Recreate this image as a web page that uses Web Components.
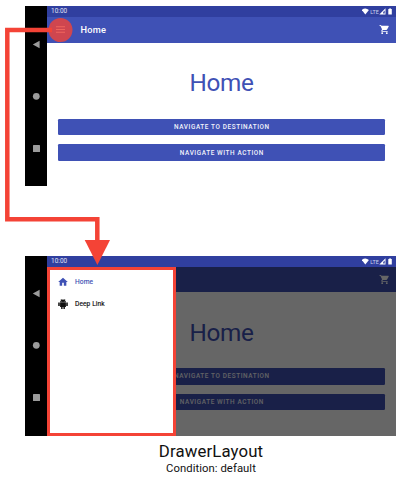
<!DOCTYPE html>
<html lang="en">
<head>
<meta charset="utf-8">
<title>DrawerLayout</title>
<style>body{margin:0;background:#fff;font-family:Roboto,"Liberation Sans",sans-serif;overflow:hidden}</style>
</head>
<body>
<drawer-flow></drawer-flow>
<script>
function define(name, html) {
  customElements.define(name, class extends HTMLElement {
    constructor() {
      super();
      this.attachShadow({ mode: 'open' }).innerHTML = html;
    }
  });
}

define('nav-rail', `<style>
:host{display:flex;flex-direction:column;align-items:center;gap:43px;width:22px;box-sizing:border-box;padding-top:33.5px;background:#000}
svg{display:block;width:9px;height:9px;fill:#9b9b9b}
</style>
<svg viewBox="0 0 9 9"><path d="M7.6 .8V8.2L.8 4.5Z"/></svg>
<svg viewBox="0 0 9 9"><circle cx="4.3" cy="4.3" r="3.4"/></svg>
<svg viewBox="0 0 9 9"><rect x="1" y="1" width="7" height="7" rx=".5"/></svg>`);

define('status-bar', `<style>
:host{display:flex;align-items:center;justify-content:space-between;height:11px;box-sizing:border-box;padding:0 3px 0 4px;background:#303f9f;color:#e0e3f4}
.time{font-size:6.4px;line-height:11px;letter-spacing:.05px}
svg{display:block;width:31px;height:11px}
text{font:6.2px Roboto,sans-serif;fill:#cfd3ee}
</style>
<span class="time">10:00</span>
<svg viewBox="0 0 31 11" fill="#fff"><path d="M-.3 4Q3.300 1 6.900 4L3.300 8.400Z"/><text x="8.300" y="8" textLength="8.400" lengthAdjust="spacingAndGlyphs">LTE</text><path fill-rule="evenodd" d="M17.300 8.400 23.500 2.200V8.400ZM21.200 5.900V7.600H22.700V4.400Z"/><path d="M26.300 3H27.400V2.200H28.700V3H29.800V8.500H26.300Z"/></svg>`);

define('app-bar', `<style>
:host{display:flex;align-items:center;height:25.7px;box-sizing:border-box;padding:0 6px 0 8.5px;background:#3f51b5;color:#fff}
.menu{width:9px;height:9px;fill:#fff;opacity:.85}
b{margin-left:16px;font-size:9.2px;line-height:12px;font-weight:500;letter-spacing:.25px;flex:1}
.cart{width:11px;height:11px;fill:#fff}
</style>
<svg class="menu" viewBox="0 0 9 9"><path d="M0 1.2H9V2.2H0ZM0 4H9V5H0ZM0 6.8H9V7.8H0Z"/></svg>
<b><slot></slot></b>
<svg class="cart" viewBox="0 0 24 24"><path d="M7 18c-1.1 0-2 .9-2 2s.9 2 2 2 2-.9 2-2-.9-2-2-2ZM1 2v2h2l3.600 7.600-1.400 2.400c-.7 1.300.3 3 1.800 3h12v-2H7.400l1-2h7.500c.7 0 1.400-.4 1.700-1l3.600-6.500c.4-.7-.1-1.500-.9-1.500H5.200l-.9-2ZM17 18c-1.100 0-2 .9-2 2s.9 2 2 2 2-.9 2-2-.9-2-2-2Z"/></svg>`);

define('wide-button', `<style>
:host{display:flex;align-items:center;justify-content:center;height:16.6px;border-radius:1.3px;background:#3f51b5;color:#f3f4fb;font-size:6.4px;font-weight:500;letter-spacing:.6px;text-indent:.8px;white-space:nowrap}
</style><slot></slot>`);

define('home-page', `<style>
:host{display:block;position:relative;height:169px;background:#fff}
main{padding:0 11px}
h1{margin:0;padding-top:24.600px;height:76px;text-align:center;color:#3f51b5;font-size:24.300px;font-weight:400;line-height:32px;letter-spacing:-.35px;box-sizing:border-box}
wide-button{margin-bottom:9px}
</style>
<app-bar><slot name="title"></slot></app-bar>
<main><h1>Home</h1><wide-button>NAVIGATE TO DESTINATION</wide-button><wide-button>NAVIGATE WITH ACTION</wide-button></main>
<slot></slot>`);

define('drawer-item', `<style>
:host{display:flex;align-items:center;gap:7px;height:22px;font-size:6.600px;letter-spacing:.1px;-webkit-text-stroke:.15px currentColor}
::slotted(svg){width:10px;height:10px;fill:currentColor}
</style><slot name="icon"></slot><slot></slot>`);

define('nav-drawer', `<style>
:host{position:absolute;inset:0;display:flex;background:rgba(0,0,0,.6)}
nav{width:129px;height:169px;box-sizing:border-box;border:3.500px solid #f44336;padding:1px 8px;background:#fff;color:#111}
.on{color:#3f51b5}
</style>
<nav>
<drawer-item class="on"><svg slot="icon" viewBox="0 0 24 24"><path d="M10 21v-7h4v7h6v-9h3.500L12 2 .5 12H4v9Z"/></svg>Home</drawer-item>
<drawer-item><svg slot="icon" viewBox="0 0 24 24"><path fill-rule="evenodd" d="M5 8.500h14V19h-2.500v5h-3.500v-5h-2v5H7.500v-5H5ZM.5 8.500h3.700V17H.5ZM19.800 8.500h3.700V17h-3.700ZM5 7.500c0-2 1-3.800 2.800-5L6.300 1l1-1L9.200 1.700a8 8 0 0 1 5.600 0L16.700 0l1 1-1.500 1.500C18 3.700 19 5.500 19 7.500ZM8.500 4.500V6H10V4.500ZM14 4.500V6h1.500V4.500Z"/></svg>Deep Link</drawer-item>
</nav>`);

define('phone-screen', `<style>
:host{display:grid;grid-template-columns:22px 349px;width:371px;height:180px}
</style>
<nav-rail></nav-rail><div><status-bar></status-bar><home-page><slot name="title" slot="title"></slot><slot></slot></home-page></div>`);

define('flow-arrow', `<style>
:host{position:absolute;inset:0}
svg{display:block}
</style>
<svg width="404" height="480"><circle cx="60.500" cy="30" r="12" fill="#f44336" fill-opacity=".8"/><path d="M52 30H7.300V219.300H97.300V243" fill="none" stroke="#f44336" stroke-width="4.500"/><path d="M84.700 240H110L97.400 265Z" fill="#f44336"/></svg>`);

define('drawer-flow', `<style>
:host{display:block;position:relative;width:404px;height:480px;box-sizing:border-box;padding:6px 0 0 25px}
.second{margin-top:69.500px}
footer{width:372px;text-align:center;color:#111;padding-top:5px}
h2{margin:0;font-size:16.800px;font-weight:400;line-height:20px;letter-spacing:.12px}
p{margin:1.500px 0 0;font-size:11.300px;line-height:14px;letter-spacing:.05px}
</style>
<phone-screen><span slot="title">Home</span></phone-screen>
<phone-screen class="second"><nav-drawer></nav-drawer></phone-screen>
<footer><h2>DrawerLayout</h2><p>Condition: default</p></footer>
<flow-arrow></flow-arrow>`);
</script>
</body>
</html>
